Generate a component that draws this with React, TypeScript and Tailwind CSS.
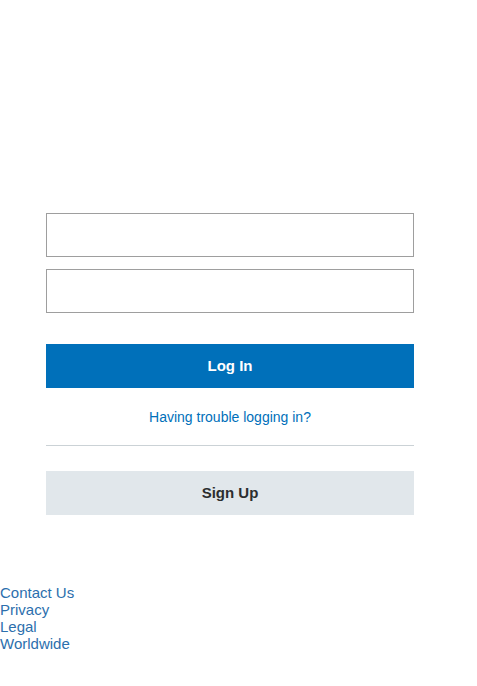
const App = () => {
  return (
    <div className="min-h-[686px] bg-white font-['Liberation_Sans',Arial,sans-serif]">
      <div className="ml-[46px] w-[368px] pt-[213px] flex flex-col">
        <input
          className="h-[44px] w-full border border-[#9e9e9e] px-3 text-[15px] outline-none"
          type="text"
        />
        <input
          className="mt-[12px] h-[44px] w-full border border-[#9e9e9e] px-3 text-[15px] outline-none"
          type="password"
        />
        <button className="mt-[31px] h-[44px] w-full bg-[#0070ba] text-[15px] font-bold text-white">
          Log In
        </button>
        <a className="mt-[21px] text-center text-[14px] leading-[17px] text-[#0070ba]" href="#">
          Having trouble logging in?
        </a>
        <div className="mt-[19px] h-px w-full bg-[#cbd2d6]" />
        <button className="mt-[25px] h-[44px] w-full bg-[#e1e7eb] text-[15px] font-bold text-[#2c2e2f]">
          Sign Up
        </button>
      </div>
      <div className="mt-[69px] flex flex-col text-[15px] leading-[17px] text-[#2c6fad]">
        <a href="#">Contact Us</a>
        <a href="#">Privacy</a>
        <a href="#">Legal</a>
        <a href="#">Worldwide</a>
      </div>
    </div>
  );
};

export default App;
